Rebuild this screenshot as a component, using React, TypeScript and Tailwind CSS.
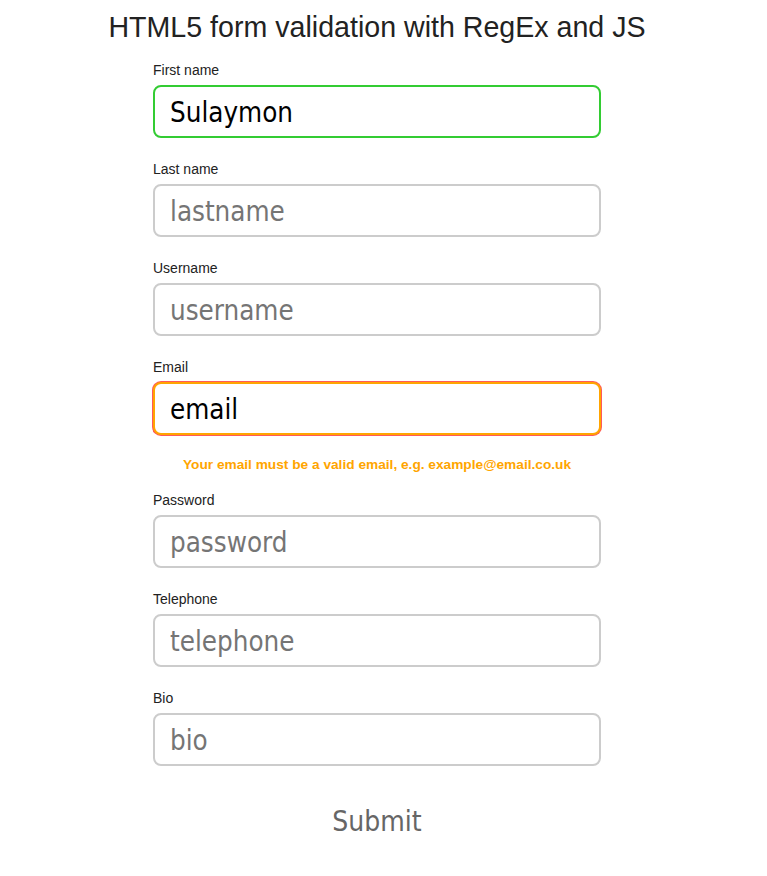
import React from "react";

const inputBase =
  "block w-full h-[53px] rounded-[8px] border-2 bg-white pl-[15px] pr-[15px] text-[27.5px] outline-none placeholder:text-[#757575]";

function Field({
  label,
  placeholder,
  value,
  cls,
}: {
  label: string;
  placeholder: string;
  value?: string;
  cls: string;
}) {
  return (
    <div>
      <label className="block text-[14px] leading-[15px] text-[#222] mb-[7px]">{label}</label>
      <input
        className={`${inputBase} ${cls}`}
        placeholder={placeholder}
        defaultValue={value}
        style={{ fontFamily: "Tahoma, 'DejaVu Sans Condensed', 'DejaVu Sans', sans-serif" }}
      />
    </div>
  );
}

export default function App() {
  return (
    <div className="w-[754px] bg-white font-['Liberation_Sans',Arial,sans-serif] text-[#222]">
      <h1 className="pt-[11px] text-center text-[28.6px] leading-[32px] font-normal text-[#222]">
        HTML5 form validation with RegEx and JS
      </h1>
      <form className="mx-auto mt-[20px] w-[448px]" onSubmit={(e) => e.preventDefault()}>
        <div className="mb-[24px]">
          <Field label="First name" placeholder="firstname" value="Sulaymon" cls="border-[#33cc33] text-black" />
        </div>
        <div className="mb-[24px]">
          <Field label="Last name" placeholder="lastname" cls="border-[#cccccc]" />
        </div>
        <div className="mb-[24px]">
          <Field label="Username" placeholder="username" cls="border-[#cccccc]" />
        </div>
        <div>
          <Field
            label="Email"
            placeholder="email"
            value="email"
            cls="border-[#ffa500] text-black shadow-[0_0_0_1px_#ff5a5a]"
          />
        </div>
        <p className="mt-[22px] mb-[20px] text-center text-[13.7px] leading-[16px] font-bold text-[#ffa500]">
          Your email must be a valid email, e.g. example@email.co.uk
        </p>
        <div className="mb-[24px]">
          <Field label="Password" placeholder="password" cls="border-[#cccccc]" />
        </div>
        <div className="mb-[24px]">
          <Field label="Telephone" placeholder="telephone" cls="border-[#cccccc]" />
        </div>
        <div>
          <Field label="Bio" placeholder="bio" cls="border-[#cccccc]" />
        </div>
        <div className="mt-[40px] flex justify-center pb-[40px]">
          <button
            type="submit"
            className="bg-transparent text-[28px] leading-[32px] text-[#666]"
            style={{ fontFamily: "Tahoma, 'DejaVu Sans Condensed', 'DejaVu Sans', sans-serif" }}
          >
            Submit
          </button>
        </div>
      </form>
    </div>
  );
}
